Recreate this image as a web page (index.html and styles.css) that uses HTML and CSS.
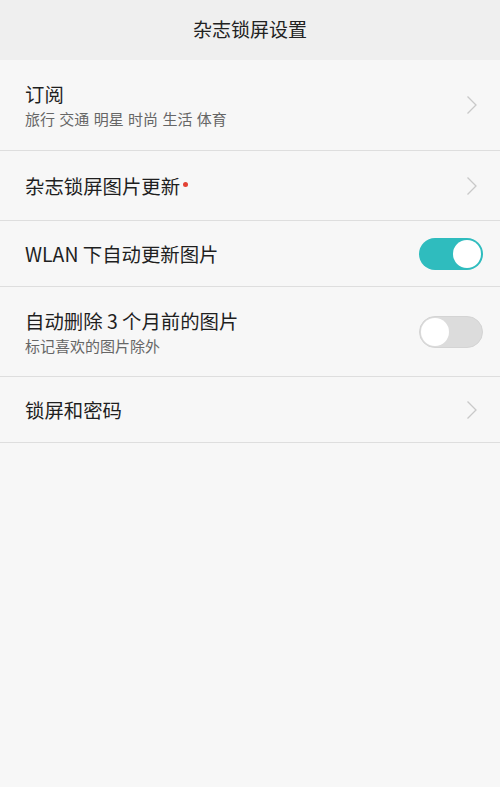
FILE: index.html
```html
<!DOCTYPE html>
<html lang="zh">
<head>
<meta charset="utf-8">
<link rel="stylesheet" href="styles.css">
</head>
<body>
<div class="header">杂志锁屏设置</div>
<div class="list">
  <div class="row tall plain">
    <div class="text">
      <div class="title">订阅</div>
      <div class="sub">旅行 交通 明星 时尚 生活 体育</div>
    </div>
    <svg class="chev" width="12" height="20" viewBox="0 0 12 20"><path d="M1.5 1.5 L10 10 L1.5 18.5" fill="none" stroke="#c9c9c9" stroke-width="1.3"/></svg>
  </div>
  <div class="row mid">
    <div class="text">
      <div class="title">杂志锁屏图片更新<span class="dot"></span></div>
    </div>
    <svg class="chev" width="12" height="20" viewBox="0 0 12 20"><path d="M1.5 1.5 L10 10 L1.5 18.5" fill="none" stroke="#c9c9c9" stroke-width="1.3"/></svg>
  </div>
  <div class="row short">
    <div class="text">
      <div class="title">WLAN 下自动更新图片</div>
    </div>
    <div class="toggle on"><span class="knob"></span></div>
  </div>
  <div class="row tall">
    <div class="text">
      <div class="title">自动删除 3 个月前的图片</div>
      <div class="sub">标记喜欢的图片除外</div>
    </div>
    <div class="toggle off"><span class="knob"></span></div>
  </div>
  <div class="row short">
    <div class="text">
      <div class="title">锁屏和密码</div>
    </div>
    <svg class="chev" width="12" height="20" viewBox="0 0 12 20"><path d="M1.5 1.5 L10 10 L1.5 18.5" fill="none" stroke="#c9c9c9" stroke-width="1.3"/></svg>
  </div>
</div>
</body>
</html>
```

FILE: styles.css
```css
html, body {
  margin: 0;
  padding: 0;
}
body {
  width: 500px;
  height: 787px;
  background: #f7f7f7;
  font-family: "Noto Sans CJK SC", "Noto Sans", sans-serif;
  color: #333;
  overflow: hidden;
}
.header {
  height: 60px;
  background: #efefef;
  display: flex;
  align-items: center;
  justify-content: center;
  font-size: 19px;
  color: #222;
  padding-bottom: 3px;
  box-sizing: border-box;
}
.list {
  display: flex;
  flex-direction: column;
}
.row {
  display: flex;
  align-items: center;
  justify-content: space-between;
  padding: 0 17px 0 25px;
  border-top: 1px solid #dedede;
  box-sizing: border-box;
}
.row.plain {
  border-top: none;
}
.row.tall { height: 90px; }
.row.mid { height: 70px; }
.row.short { height: 66px; }
.list .row:last-child { border-bottom: 1px solid #dedede; height: 67px; }
.text {
  display: flex;
  flex-direction: column;
}
.title {
  font-size: 19.4px;
  line-height: 26px;
  color: #1f1f1f;
  display: flex;
  align-items: center;
}
.sub {
  font-size: 15px;
  line-height: 20px;
  color: #666;
  margin-top: 2px;
  word-spacing: 1px;
}
.dot {
  width: 5px;
  height: 5px;
  border-radius: 50%;
  background: #e34234;
  margin-left: 3px;
  margin-top: -2px;
}
.chev {
  margin-right: 5px;
}
.toggle {
  width: 64px;
  height: 32px;
  border-radius: 16px;
  box-sizing: border-box;
  display: flex;
  align-items: center;
  padding: 2px;
}
.toggle.on {
  background: #2fbcbe;
  justify-content: flex-end;
}
.toggle.off {
  background: #dcdcdc;
  border: 1px solid #d4d4d4;
  padding: 1px;
  justify-content: flex-start;
}
.knob {
  width: 28px;
  height: 28px;
  border-radius: 50%;
  background: #fff;
}
```
